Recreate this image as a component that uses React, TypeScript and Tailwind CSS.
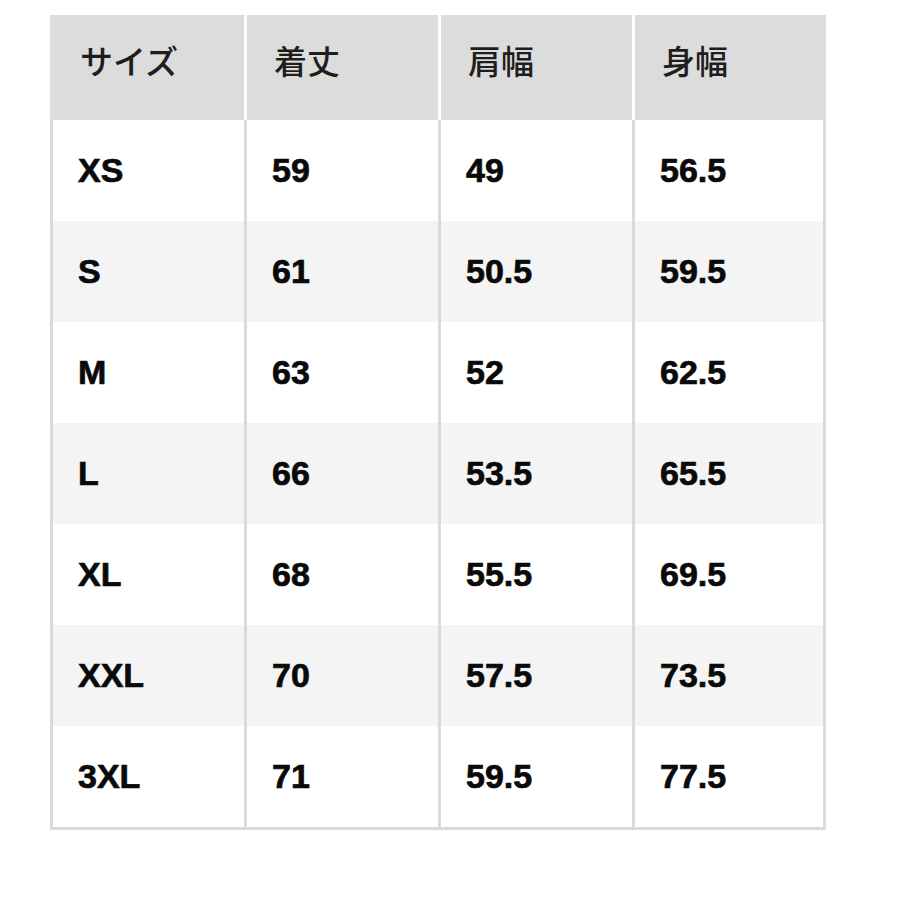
const header = ['サイズ', '着丈', '肩幅', '身幅'];

const rows = [
  ['XS', '59', '49', '56.5'],
  ['S', '61', '50.5', '59.5'],
  ['M', '63', '52', '62.5'],
  ['L', '66', '53.5', '65.5'],
  ['XL', '68', '55.5', '69.5'],
  ['XXL', '70', '57.5', '73.5'],
  ['3XL', '71', '59.5', '77.5'],
];

const App = () => {
  return (
    <div className="min-h-screen w-[900px] bg-white pt-[15px] pl-[50px]">
      <div className="w-[776px]">
        {/* Header */}
        <div className="grid grid-cols-4">
          {header.map((h, i) => (
            <div
              key={h}
              className={
                'flex h-[105px] items-center bg-[#dcdcdc] pb-[13px] pl-[27px] text-[33px] font-medium text-[#1e1e1e] ' +
                (i === 0 ? 'border-l-[3px] border-[#dcdcdc] ' : 'border-l-[3px] border-white ') +
                (i === 3 ? 'border-r-[3px] border-r-[#dcdcdc]' : '')
              }
              style={{ fontFamily: '"Noto Sans CJK JP", "Noto Sans", sans-serif' }}
            >
              {h}
            </div>
          ))}
        </div>

        {/* Body */}
        <div className="border-b-[3px] border-[#dadada]">
          {rows.map((r, ri) => (
            <div
              key={r[0]}
              className={'grid grid-cols-4 ' + (ri % 2 === 1 ? 'bg-[#f4f4f4]' : 'bg-white')}
            >
              {r.map((c, ci) => (
                <div
                  key={ci}
                  className={
                    'flex h-[101px] items-center border-l-[3px] border-[#dadada] pl-[25px] text-[34px] font-bold text-[#0a0a0a] [-webkit-text-stroke:0.7px_#0a0a0a] ' +
                    (ci === 3 ? 'border-r-[3px]' : '')
                  }
                  style={{ fontFamily: '"Liberation Sans", Arial, sans-serif' }}
                >
                  {c}
                </div>
              ))}
            </div>
          ))}
        </div>
      </div>
    </div>
  );
};

export default App;
